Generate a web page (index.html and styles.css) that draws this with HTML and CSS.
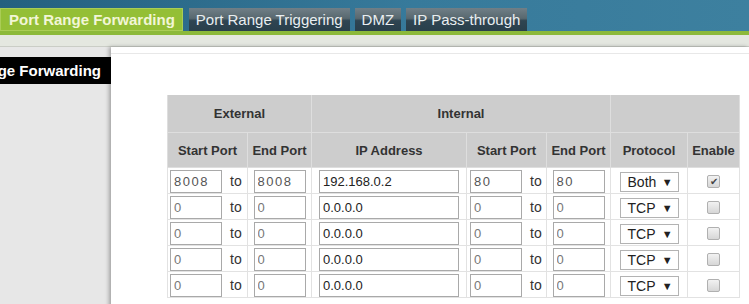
FILE: index.html
```html
<!DOCTYPE html>
<html lang="en">
<head>
    <meta charset="UTF-8">
    <title>Port Range Forwarding</title>
    <link rel="stylesheet" href="styles.css">
</head>
<body>
    <div id="topbar">
        <nav class="tabs">
            <a class="tab active" href="#">Port Range Forwarding</a>
            <a class="tab" href="#">Port Range Triggering</a>
            <a class="tab" href="#">DMZ</a>
            <a class="tab" href="#">IP Pass-through</a>
        </nav>
    </div>
    <div class="green-line"></div>
    <div class="subbar"></div>

    <div class="page">
        <aside class="sidebar">
            <div class="side-title"><span>Port Range Forwarding</span></div>
        </aside>

        <main class="panel">
            <div class="panel-rule"></div>
            <table class="fwd-table">
                <colgroup>
                    <col class="c-start">
                    <col class="c-end">
                    <col class="c-ip">
                    <col class="c-start">
                    <col class="c-end">
                    <col class="c-proto">
                    <col class="c-enable">
                </colgroup>
                <thead>
                    <tr class="head-top">
                        <th colspan="2">External</th>
                        <th colspan="3">Internal</th>
                        <th colspan="2"></th>
                    </tr>
                    <tr class="head-sub">
                        <th>Start Port</th>
                        <th>End Port</th>
                        <th>IP Address</th>
                        <th>Start Port</th>
                        <th>End Port</th>
                        <th>Protocol</th>
                        <th>Enable</th>
                    </tr>
                </thead>
                <tbody>
                    <tr>
                        <td class="from"><input class="port wide" type="text" value="8008"><span class="to">to</span></td>
                        <td><input class="port wide" type="text" value="8008"></td>
                        <td><input class="ip" type="text" value="192.168.0.2"></td>
                        <td class="from"><input class="port wide" type="text" value="80"><span class="to">to</span></td>
                        <td><input class="port wide" type="text" value="80"></td>
                        <td><div class="select"><span>Both</span><span class="arrow">▼</span></div></td>
                        <td><span class="check checked">✔</span></td>
                    </tr>
                    <tr>
                        <td class="from"><input class="port" type="text" value="0"><span class="to">to</span></td>
                        <td><input class="port" type="text" value="0"></td>
                        <td><input class="ip" type="text" value="0.0.0.0"></td>
                        <td class="from"><input class="port" type="text" value="0"><span class="to">to</span></td>
                        <td><input class="port" type="text" value="0"></td>
                        <td><div class="select"><span>TCP</span><span class="arrow">▼</span></div></td>
                        <td><span class="check"></span></td>
                    </tr>
                    <tr>
                        <td class="from"><input class="port" type="text" value="0"><span class="to">to</span></td>
                        <td><input class="port" type="text" value="0"></td>
                        <td><input class="ip" type="text" value="0.0.0.0"></td>
                        <td class="from"><input class="port" type="text" value="0"><span class="to">to</span></td>
                        <td><input class="port" type="text" value="0"></td>
                        <td><div class="select"><span>TCP</span><span class="arrow">▼</span></div></td>
                        <td><span class="check"></span></td>
                    </tr>
                    <tr>
                        <td class="from"><input class="port" type="text" value="0"><span class="to">to</span></td>
                        <td><input class="port" type="text" value="0"></td>
                        <td><input class="ip" type="text" value="0.0.0.0"></td>
                        <td class="from"><input class="port" type="text" value="0"><span class="to">to</span></td>
                        <td><input class="port" type="text" value="0"></td>
                        <td><div class="select"><span>TCP</span><span class="arrow">▼</span></div></td>
                        <td><span class="check"></span></td>
                    </tr>
                    <tr>
                        <td class="from"><input class="port" type="text" value="0"><span class="to">to</span></td>
                        <td><input class="port" type="text" value="0"></td>
                        <td><input class="ip" type="text" value="0.0.0.0"></td>
                        <td class="from"><input class="port" type="text" value="0"><span class="to">to</span></td>
                        <td><input class="port" type="text" value="0"></td>
                        <td><div class="select"><span>TCP</span><span class="arrow">▼</span></div></td>
                        <td><span class="check"></span></td>
                    </tr>
                </tbody>
            </table>
        </main>
    </div>
</body>
</html>
```

FILE: styles.css
```css
body {
    margin: 0;
    height: 304px;
    overflow: hidden;
    font-family: 'Liberation Sans', Arial, sans-serif;
    background-color: #e7e7e7;
}

#topbar {
    height: 31px;
    padding-top: 8px;
    box-sizing: border-box;
    background: linear-gradient(to right, #24607f, #377a9b 55%, #3d809f);
}
.tabs {
    display: flex;
    gap: 5px;
    height: 23px;
}
.tab {
    display: block;
    height: 23px;
    line-height: 23px;
    padding: 0 7px;
    font-size: 15px;
    color: #e9eef0;
    text-decoration: none;
    white-space: nowrap;
    background: linear-gradient(#707f87, #58686f 45%, #2f4552 55%, #293f4b);
    box-sizing: border-box;
}
.tab.active {
    padding: 0 7px 0 8px;
    font-size: 15px;
    font-weight: bold;
    color: #f2f6d6;
    background-color: #94bf36;
    background-image: none;
    border: 1px solid #aacd55;
    line-height: 21px;
    margin-right: 1px;
}

.green-line {
    height: 4px;
    background-color: #8cb93a;
}
.subbar {
    height: 11px;
    background-color: #e4e7e0;
    border-bottom: 1px solid #cacdc6;
}

.page {
    display: flex;
    height: 300px;
}
.sidebar {
    width: 111px;
    flex-shrink: 0;
    background-color: #e7e7e7;
    padding-top: 10px;
}
.side-title {
    display: flex;
    justify-content: flex-end;
    overflow: hidden;
    height: 27px;
    line-height: 27px;
    background-color: #000;
    color: #fff;
    font-weight: bold;
    font-size: 15px;
    padding-right: 10px;
    white-space: nowrap;
}
.side-title span {
    flex-shrink: 0;
}

.panel {
    flex: 1;
    background-color: #fff;
    box-shadow: -2px 0 4px rgba(0, 0, 0, 0.3);
    padding-top: 6px;
}
.panel-rule {
    height: 1px;
    background-color: #e8e8e8;
}

.fwd-table {
    margin: 41px 0 0 56px;
    border-collapse: collapse;
    table-layout: fixed;
    width: 573px;
    font-size: 13px;
    color: #222;
}
.c-start { width: 80px; }
.c-end { width: 64px; }
.c-ip { width: 155px; }
.c-proto { width: 77px; }
.c-enable { width: 52px; }

.fwd-table th {
    background-color: #cdcdcd;
    color: #333;
    font-size: 13px;
    font-weight: bold;
    border: 1px solid #dedede;
    text-align: center;
    padding: 0;
}
.head-top th {
    height: 37px;
    border-top: none;
}
.head-sub th {
    height: 34px;
}

.fwd-table td {
    border: 1px solid #e2e2e2;
    padding: 2px 0 0 0;
    height: 23px;
    text-align: center;
    vertical-align: top;
}
.fwd-table td.from {
    text-align: left;
    padding-left: 2px;
}
.fwd-table td.from:nth-child(4) {
    padding-left: 3px;
}

input {
    font-family: 'Liberation Sans', Arial, sans-serif;
    height: 23px;
    box-sizing: border-box;
    border: 1px solid #a9a9a9;
    padding: 0 3px;
    margin: 0;
    font-size: 13px;
    vertical-align: top;
    outline: none;
}
.port {
    width: 52px;
    color: #777;
}
.port.wide {
    letter-spacing: 1.5px;
    color: #555;
}
.ip {
    width: 140px;
    color: #222;
}
.to {
    display: inline-block;
    margin-left: 8px;
    line-height: 23px;
    font-size: 14px;
    color: #333;
}

.select {
    display: inline-flex;
    justify-content: space-between;
    align-items: center;
    width: 59px;
    height: 20px;
    box-sizing: border-box;
    margin-top: 2px;
    padding: 0 5px 0 7px;
    border: 1px solid #b3b3b3;
    font-size: 14px;
    color: #222;
    background-color: #fff;
}
.select .arrow {
    font-size: 11px;
}

.check {
    display: inline-block;
    width: 13px;
    height: 13px;
    margin-top: 5px;
    box-sizing: border-box;
    border: 1px solid #b0b0b0;
    border-radius: 2px;
    background: linear-gradient(#f2f2f2, #d6d6d6);
    font-size: 10px;
    line-height: 11px;
    color: #444;
    text-align: center;
}
```
